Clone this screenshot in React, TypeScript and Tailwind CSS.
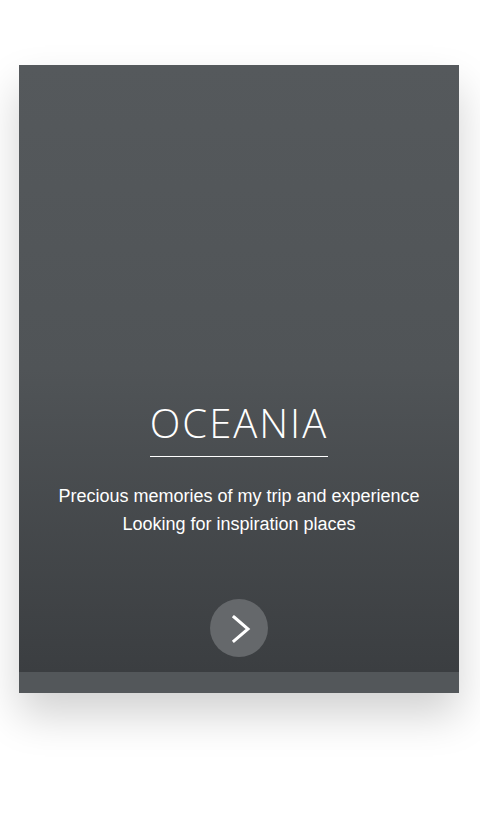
import React from "react";

export default function App() {
  return (
    <div className="w-[480px] h-[814px] bg-white pt-[65px] pl-[19px]">
      <div className="w-[440px] h-[628px] flex flex-col shadow-[0_22px_40px_rgba(0,0,0,0.18)]">
        <div className="h-[607px] flex flex-col items-center pt-[338px] bg-gradient-to-b from-[#55595c] via-[#505457] to-[#3b3e41]">
          <h1
            className="inline-block text-white text-[40px] leading-none font-light tracking-[2px] pb-[13px] border-b border-white"
            style={{ fontFamily: '"Open Sans", sans-serif' }}
          >
            OCEANIA
          </h1>
          <p
            className="mt-[25px] text-white text-[18px] leading-[28px] text-center"
            style={{ fontFamily: '"Liberation Sans", Arial, sans-serif' }}
          >
            Precious memories of my trip and experience
            <br />
            Looking for inspiration places
          </p>
          <button className="mt-[61px] w-[58px] h-[58px] rounded-full bg-[#65686b] flex items-center justify-center">
            <svg width="58" height="58" viewBox="0 0 58 58">
              <polyline
                points="24,18 38,30 24,42"
                fill="none"
                stroke="white"
                strokeWidth="3"
                strokeLinecap="square"
              />
            </svg>
          </button>
        </div>
        <div className="h-[21px] bg-[#53575a]" />
      </div>
    </div>
  );
}
